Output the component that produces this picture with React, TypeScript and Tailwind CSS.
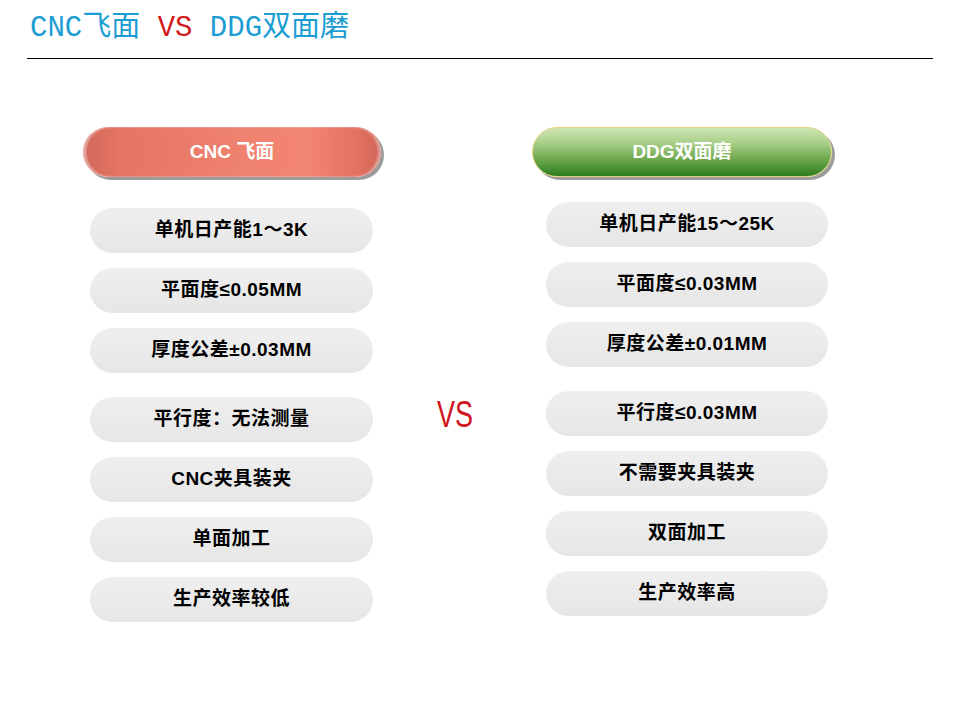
const leftItems = [
  "单机日产能1～3K",
  "平面度≤0.05MM",
  "厚度公差±0.03MM",
  "平行度：无法测量",
  "CNC夹具装夹",
  "单面加工",
  "生产效率较低",
];

const rightItems = [
  "单机日产能15～25K",
  "平面度≤0.03MM",
  "厚度公差±0.01MM",
  "平行度≤0.03MM",
  "不需要夹具装夹",
  "双面加工",
  "生产效率高",
];

function Pill({ text, gap }: { text: string; gap: boolean }) {
  return (
    <div
      className={
        "h-[45px] rounded-full bg-gradient-to-b from-[#efefef] to-[#e6e6e6] flex items-center justify-center text-[19px] font-bold text-black tracking-[0.5px] " +
        (gap ? "mt-[24px]" : "mt-[15px]")
      }
    >
      {text}
    </div>
  );
}

function ItemList({ items }: { items: string[] }) {
  return (
    <div className="flex flex-col [&>*:first-child]:mt-0">
      {items.map((t, i) => (
        <Pill key={t} text={t} gap={i === 3} />
      ))}
    </div>
  );
}

export default function App() {
  return (
    <div className="w-[960px] h-[720px] bg-white overflow-hidden font-['Liberation_Sans','Noto_Sans_CJK_SC',sans-serif]">
      {/* title */}
      <div className="mx-[27px] h-[59px] border-b border-black pl-[3px] pt-[13px]">
        <div className="text-[29px] leading-[32px] text-[#1b9dd3] font-['Liberation_Mono','Noto_Sans_CJK_SC',monospace] whitespace-pre">
          CNC飞面 <span className="text-[#d21a1a]">VS</span> DDG双面磨
        </div>
      </div>

      <div className="flex mt-[68px]">
        {/* left column */}
        <div className="ml-[83px] w-[302px]">
          <div className="w-[298px] h-[50px] rounded-full bg-[linear-gradient(90deg,#d2665a_0%,#e57563_12%,#f08270_55%,#f28571_75%,#e27261_92%,#cf6558_100%)] shadow-[3px_3px_0_#9c9c9c,inset_3px_0_2px_rgba(255,255,255,0.45),inset_-3px_0_2px_rgba(255,255,255,0.35)] flex items-center justify-center text-white font-bold text-[19px]">
            CNC 飞面
          </div>
          <div className="mt-[31px] ml-[7px] w-[283px]">
            <ItemList items={leftItems} />
          </div>
        </div>

        {/* middle VS */}
        <div className="w-[147px] flex justify-center pt-[270px] pr-[7px]">
          <div className="text-[36px] leading-[36px] text-[#d2141c] scale-x-75 h-[36px]">VS</div>
        </div>

        {/* right column */}
        <div className="w-[304px]">
          <div className="w-[300px] h-[50px] rounded-full border-[1.5px] border-[#e3d27c] bg-[linear-gradient(180deg,#cfe5b2_0%,#a9d08a_30%,#6fa94f_65%,#2d7d1f_100%)] shadow-[3px_3px_0_#9c9c9c] flex items-center justify-center text-white font-bold text-[19px]">
            DDG双面磨
          </div>
          <div className="mt-[25px] ml-[14px] w-[282px]">
            <ItemList items={rightItems} />
          </div>
        </div>
      </div>
    </div>
  );
}
